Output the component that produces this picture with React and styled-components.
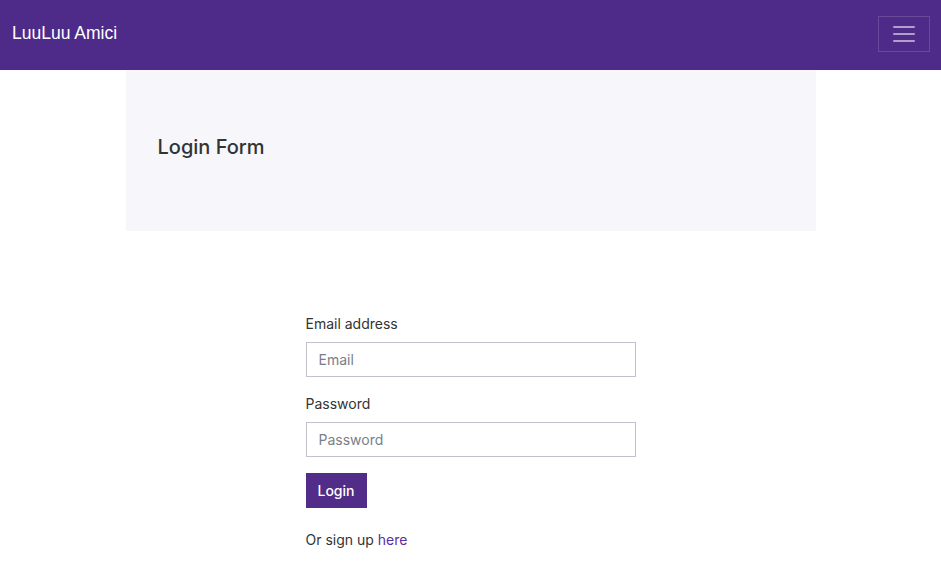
import React from 'react';
import styled, { createGlobalStyle } from 'styled-components';

const GlobalStyle = createGlobalStyle`
  body {
    margin: 0;
    font-family: Inter, "Liberation Sans", Arial, sans-serif;
    color: #212529;
    background: #fff;
  }
`;

const Navbar = styled.nav`
  height: 70px;
  background-color: #4f2b89;
  display: flex;
  align-items: center;
  justify-content: space-between;
  padding: 0 11px 0 12px;
`;

const Brand = styled.a`
  color: #fff;
  font-family: "Liberation Sans", Arial, sans-serif;
  font-size: 17.5px;
  text-decoration: none;
  margin-top: -4px;
`;

const Toggler = styled.button`
  width: 52px;
  height: 36px;
  border: 1px solid rgba(255, 255, 255, 0.15);
  background: transparent;
  display: flex;
  align-items: center;
  justify-content: center;
  padding: 0;
  cursor: pointer;
  margin-top: -2px;
`;

const Hero = styled.section`
  width: 690px;
  height: 161px;
  margin: 0 auto;
  background: #f7f6fb;
  display: flex;
  align-items: center;
  padding: 0 32px;
  box-sizing: border-box;
  .hero__title {
    margin: 0;
    font-size: 20px;
    font-weight: 500;
    color: #333;
    padding-bottom: 8px;
  }
`;

const Form = styled.form`
  width: 330px;
  margin: 84px auto 0;
`;

const Field = styled.div`
  margin-bottom: 18px;
  &:last-of-type {
    margin-bottom: 16px;
  }
`;

const Label = styled.label`
  display: block;
  font-size: 14px;
  color: #333;
  margin-bottom: 10px;
`;

const Input = styled.input`
  display: block;
  width: 100%;
  height: 35px;
  box-sizing: border-box;
  border: 1px solid #c3c2cc;
  border-radius: 0;
  padding: 0 12px;
  font-family: inherit;
  font-size: 14px;
  color: #333;
  outline: none;
  &::placeholder {
    color: #7a7e87;
  }
`;

const Button = styled.button`
  height: 35px;
  padding: 0 12px;
  border: none;
  border-radius: 0;
  background: #512c88;
  color: #fff;
  font-family: inherit;
  font-size: 14px;
  font-weight: 500;
  cursor: pointer;
`;

const SignUp = styled.p`
  margin: 23px 0 0;
  font-size: 14px;
  color: #333;
  a {
    color: #5b2f9e;
    text-decoration: none;
  }
`;

export default function App() {
  return (
    <>
      <GlobalStyle />
      <Navbar>
        <Brand href="#">LuuLuu Amici</Brand>
        <Toggler type="button" aria-label="Toggle navigation">
          <svg width="22" height="18" viewBox="0 0 22 18">
            <g stroke="rgba(255,255,255,0.55)" strokeWidth="2" strokeLinecap="round">
              <line x1="1" y1="2" x2="21" y2="2" />
              <line x1="1" y1="9" x2="21" y2="9" />
              <line x1="1" y1="16" x2="21" y2="16" />
            </g>
          </svg>
        </Toggler>
      </Navbar>
      <Hero>
        <h1 className="hero__title">Login Form</h1>
      </Hero>
      <Form onSubmit={(e) => e.preventDefault()}>
        <Field>
          <Label htmlFor="email">Email address</Label>
          <Input id="email" type="email" placeholder="Email" />
        </Field>
        <Field>
          <Label htmlFor="password">Password</Label>
          <Input id="password" type="password" placeholder="Password" />
        </Field>
        <Button type="submit">Login</Button>
        <SignUp>
          Or sign up <a href="#">here</a>
        </SignUp>
      </Form>
    </>
  );
}
